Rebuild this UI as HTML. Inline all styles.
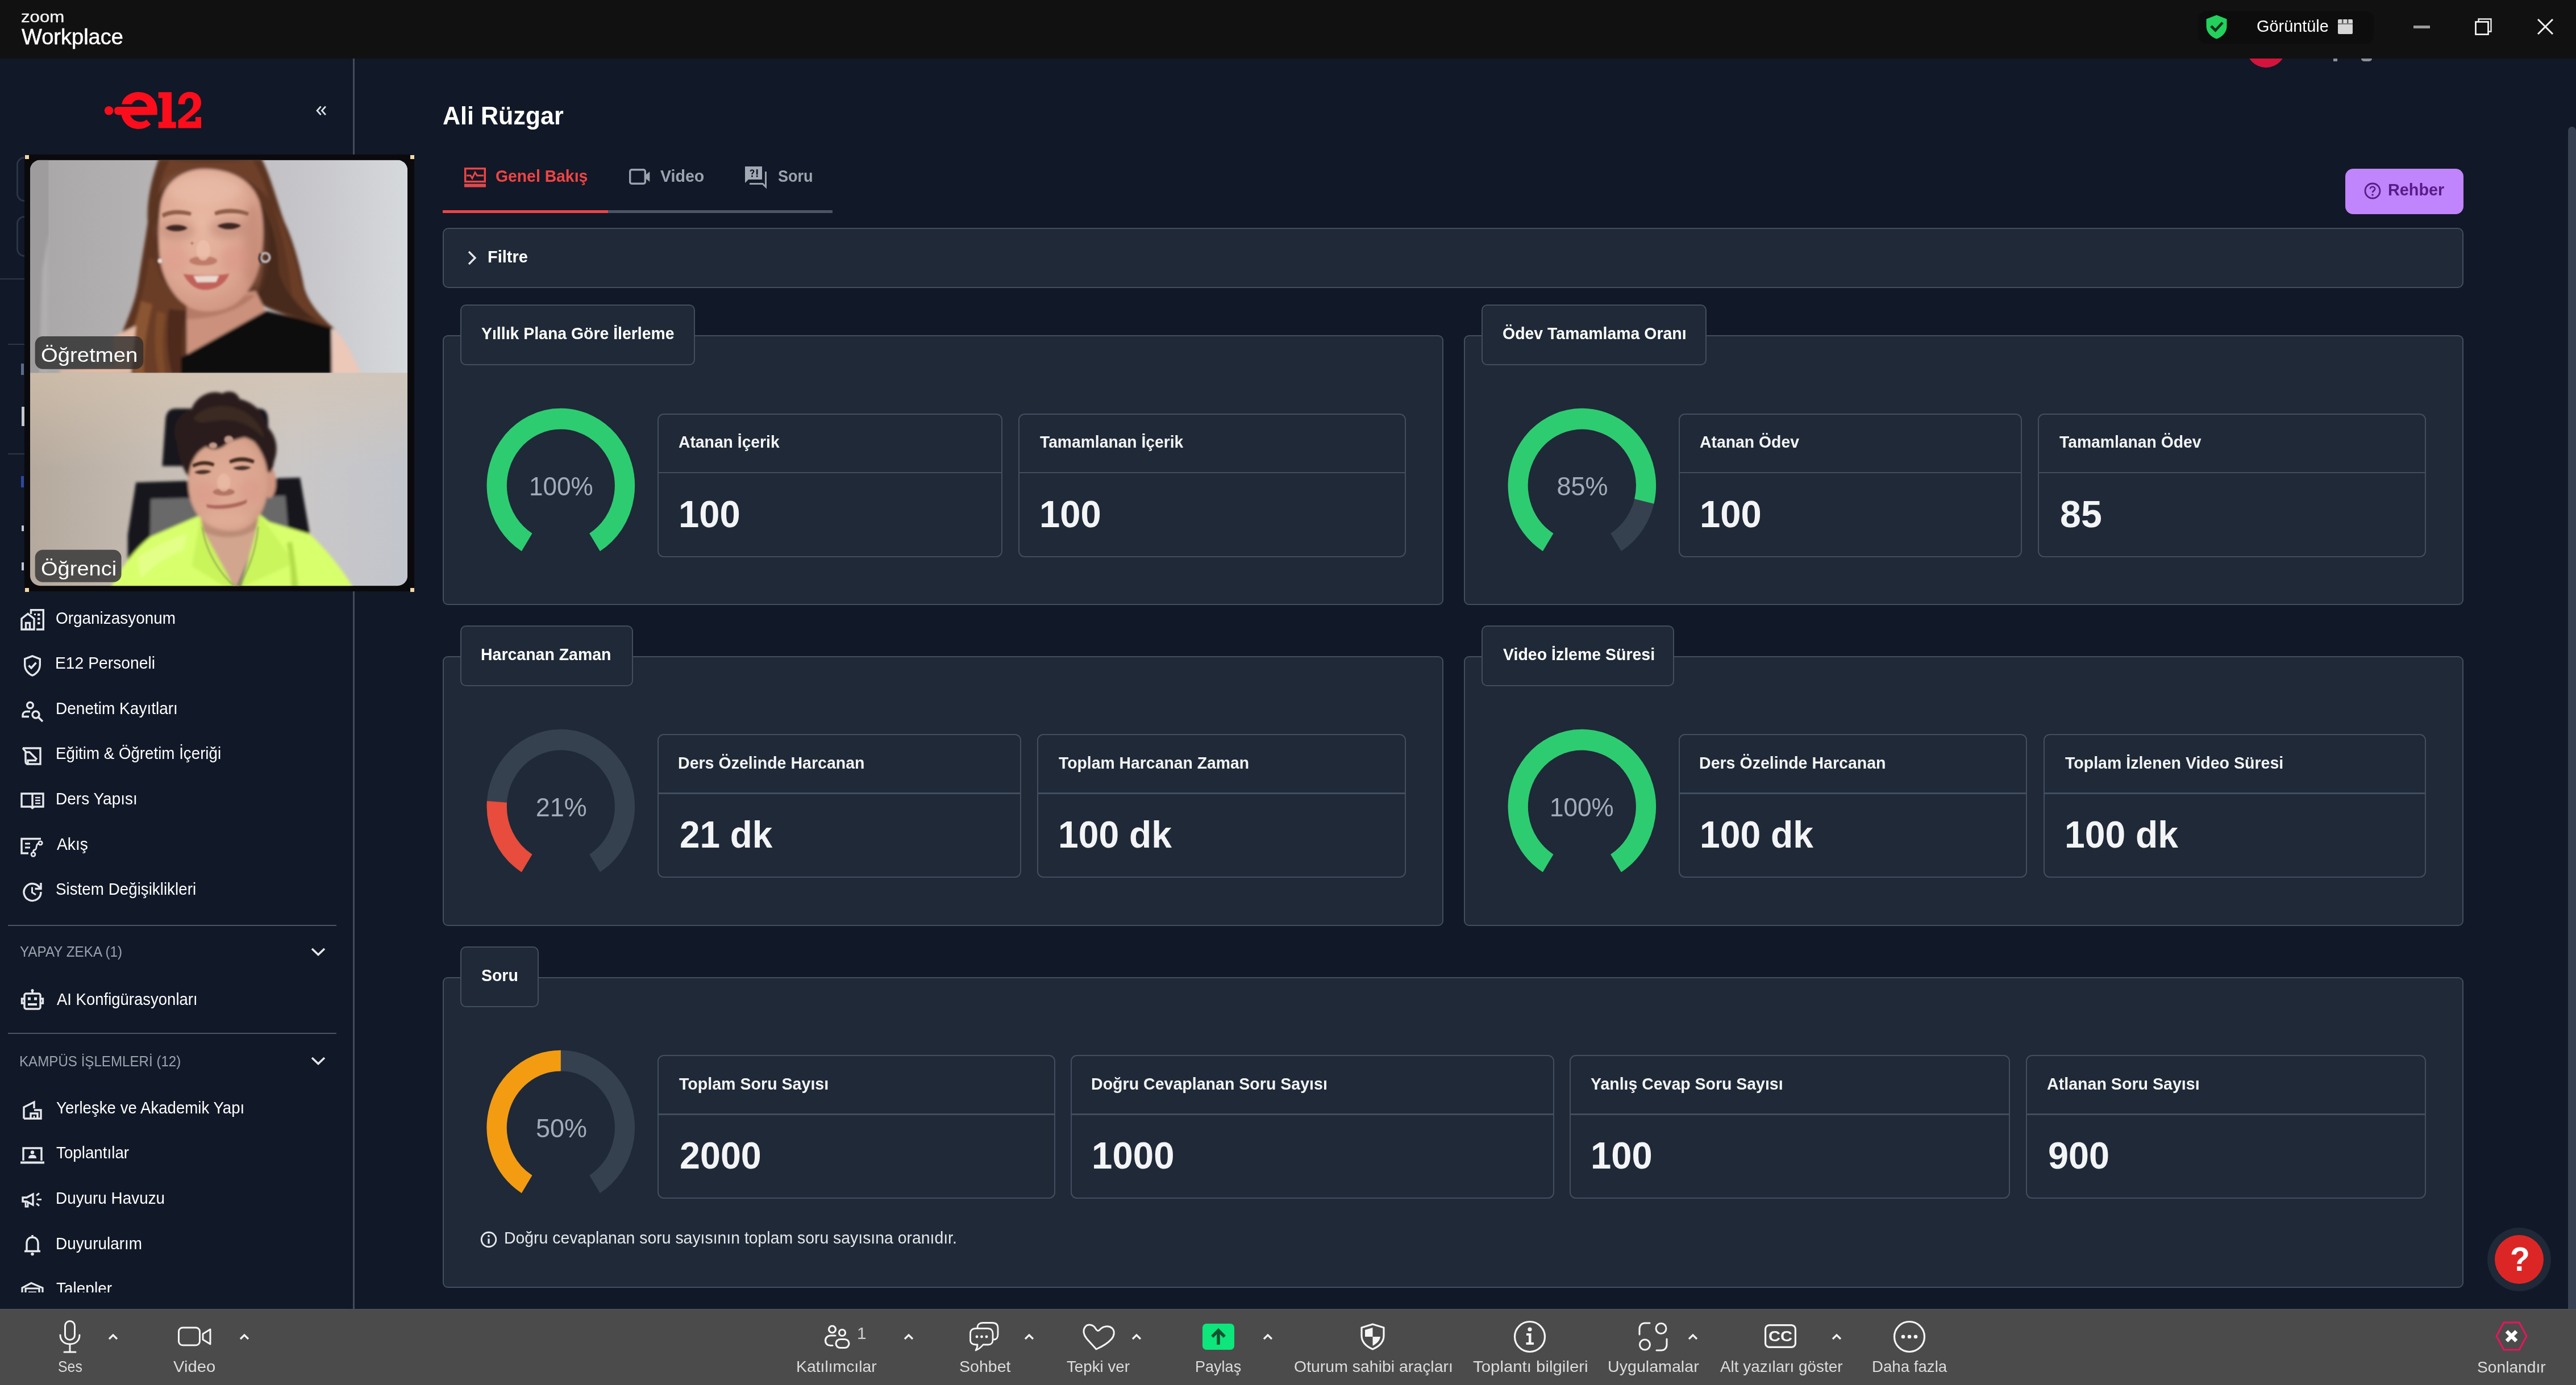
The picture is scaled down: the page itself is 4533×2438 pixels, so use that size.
<!DOCTYPE html>
<html><head><meta charset="utf-8"><title>Zoom Workplace</title>
<style>
html,body{margin:0;padding:0;background:#111827;}
body{width:4533px;height:2438px;position:relative;overflow:hidden;font-family:"Liberation Sans",sans-serif;}
.t{position:absolute;white-space:nowrap;line-height:1;transform-origin:0 50%;}
.b{position:absolute;box-sizing:border-box;}
svg{position:absolute;overflow:visible;}
</style></head><body>
<div class="b" style="left:0px;top:103px;width:4533px;height:2201px;background:#111827;"></div>
<div class="b" style="left:620.7px;top:103px;width:3.2999999999999545px;height:2201px;background:#434b5b;"></div>
<div class="t" style="left:778.9px;top:183.5px;font-size:42px;color:#ffffff;font-weight:700;transform:scale(1.0242,1.035);">Ali Rüzgar</div>
<div class="b" style="left:779px;top:370px;width:686px;height:5px;background:#4b5563;"></div>
<div class="b" style="left:779px;top:370px;width:291px;height:5px;background:#ef4444;"></div>
<div class="t" style="left:871.9px;top:296.8px;font-size:28px;color:#ef4444;font-weight:700;transform:scale(1.0123,1.035);">Genel Bakış</div>
<div class="t" style="left:1161.9px;top:296.8px;font-size:28px;color:#9ca3af;font-weight:700;transform:scale(1.0204,1.035);">Video</div>
<div class="t" style="left:1369.2px;top:296.8px;font-size:28px;color:#9ca3af;font-weight:700;transform:scale(0.9666,1.035);">Soru</div>
<div class="b" style="left:4127px;top:297px;width:208px;height:80px;background:#c084fc;border-radius:14px;"></div>
<div class="t" style="left:4202.1px;top:321.3px;font-size:28px;color:#581c87;font-weight:700;transform:scale(1.0295,1.035);">Rehber</div>
<div class="b" style="left:779px;top:401px;width:3556px;height:106px;background:#1f2937;border:2px solid #424e60;border-radius:10px;"></div>
<div class="t" style="left:858.1px;top:439.3px;font-size:28px;color:#ffffff;font-weight:700;transform:scale(1.0356,1.035);">Filtre</div>
<div class="b" style="left:779px;top:590px;width:1761px;height:475px;background:#1f2937;border:2px solid #424e60;border-radius:9px;"></div>
<div class="b" style="left:810px;top:536px;width:413px;height:107px;background:#1f2937;border:2px solid #424e60;border-radius:10px;"></div>
<div class="t" style="left:847.4px;top:574.3px;font-size:28px;color:#ffffff;font-weight:700;transform:scale(1.0148,1.035);">Yıllık Plana Göre İlerleme</div>
<svg class="b" style="left:839.15px;top:706.65px" width="295.70000000000005" height="295.70000000000005" viewBox="839.15 706.65 295.70000000000005 295.70000000000005"><g transform="translate(0 -37.598) scale(1 1.044)"><path d="M927.30 950.03A112.65 112.65 0 1 1 1046.70 950.03" fill="none" stroke="#36414f" stroke-width="35.2"/><path d="M927.30 950.03A112.65 112.65 0 1 1 1046.70 950.03" fill="none" stroke="#2ecc71" stroke-width="35.2"/></g></svg>
<div class="t" style="left:930.7px;top:833.0px;font-size:45px;color:#a3abb8;transform:scale(0.9796,1.035);">100%</div>
<div class="b" style="left:1157px;top:727.5px;width:607px;height:253.0px;border:2px solid #424e60;border-radius:11px;"></div>
<div class="b" style="left:1157px;top:830.5px;width:607px;height:2.5px;background:#424e60;"></div>
<div class="t" style="left:1194.3px;top:765.3px;font-size:28px;color:#f3f4f6;font-weight:700;transform:scale(1.0106,1.035);">Atanan İçerik</div>
<div class="t" style="left:1194.1px;top:871.7px;font-size:65px;color:#f3f4f6;font-weight:700;transform:scale(1.0027,1.035);">100</div>
<div class="b" style="left:1792px;top:727.5px;width:682px;height:253.0px;border:2px solid #424e60;border-radius:11px;"></div>
<div class="b" style="left:1792px;top:830.5px;width:682px;height:2.5px;background:#424e60;"></div>
<div class="t" style="left:1829.7px;top:765.3px;font-size:28px;color:#f3f4f6;font-weight:700;transform:scale(1.0090,1.035);">Tamamlanan İçerik</div>
<div class="t" style="left:1829.1px;top:871.7px;font-size:65px;color:#f3f4f6;font-weight:700;transform:scale(1.0027,1.035);">100</div>
<div class="b" style="left:2576px;top:590px;width:1759px;height:475px;background:#1f2937;border:2px solid #424e60;border-radius:9px;"></div>
<div class="b" style="left:2607px;top:536px;width:396px;height:107px;background:#1f2937;border:2px solid #424e60;border-radius:10px;"></div>
<div class="t" style="left:2643.9px;top:574.3px;font-size:28px;color:#ffffff;font-weight:700;transform:scale(1.0161,1.035);">Ödev Tamamlama Oranı</div>
<svg class="b" style="left:2635.85px;top:706.65px" width="295.70000000000005" height="295.70000000000005" viewBox="2635.85 706.65 295.70000000000005 295.70000000000005"><g transform="translate(0 -37.598) scale(1 1.044)"><path d="M2724.00 950.03A112.65 112.65 0 1 1 2843.40 950.03" fill="none" stroke="#36414f" stroke-width="35.2"/><path d="M2724.00 950.03A112.65 112.65 0 1 1 2893.19 880.99" fill="none" stroke="#2ecc71" stroke-width="35.2"/></g></svg>
<div class="t" style="left:2739.5px;top:833.0px;font-size:45px;color:#a3abb8;transform:scale(1.0000,1.035);">85%</div>
<div class="b" style="left:2954px;top:727.5px;width:604px;height:253.0px;border:2px solid #424e60;border-radius:11px;"></div>
<div class="b" style="left:2954px;top:830.5px;width:604px;height:2.5px;background:#424e60;"></div>
<div class="t" style="left:2991.3px;top:765.3px;font-size:28px;color:#f3f4f6;font-weight:700;transform:scale(1.0129,1.035);">Atanan Ödev</div>
<div class="t" style="left:2991.1px;top:871.7px;font-size:65px;color:#f3f4f6;font-weight:700;transform:scale(1.0027,1.035);">100</div>
<div class="b" style="left:3586px;top:727.5px;width:683px;height:253.0px;border:2px solid #424e60;border-radius:11px;"></div>
<div class="b" style="left:3586px;top:830.5px;width:683px;height:2.5px;background:#424e60;"></div>
<div class="t" style="left:3623.7px;top:765.3px;font-size:28px;color:#f3f4f6;font-weight:700;transform:scale(1.0106,1.035);">Tamamlanan Ödev</div>
<div class="t" style="left:3625.0px;top:871.7px;font-size:65px;color:#f3f4f6;font-weight:700;transform:scale(1.0208,1.035);">85</div>
<div class="b" style="left:779px;top:1155px;width:1761px;height:475px;background:#1f2937;border:2px solid #424e60;border-radius:9px;"></div>
<div class="b" style="left:810px;top:1101px;width:303.5px;height:107px;background:#1f2937;border:2px solid #424e60;border-radius:10px;"></div>
<div class="t" style="left:846.1px;top:1139.3px;font-size:28px;color:#ffffff;font-weight:700;transform:scale(1.0172,1.035);">Harcanan Zaman</div>
<svg class="b" style="left:839.15px;top:1271.65px" width="295.70000000000005" height="295.70000000000005" viewBox="839.15 1271.65 295.70000000000005 295.70000000000005"><g transform="translate(0 -62.458) scale(1 1.044)"><path d="M927.30 1515.03A112.65 112.65 0 1 1 1046.70 1515.03" fill="none" stroke="#36414f" stroke-width="35.2"/><path d="M927.30 1515.03A112.65 112.65 0 0 1 874.65 1411.33" fill="none" stroke="#e74c3c" stroke-width="35.2"/></g></svg>
<div class="t" style="left:942.7px;top:1398.0px;font-size:45px;color:#a3abb8;transform:scale(1.0000,1.035);">21%</div>
<div class="b" style="left:1157px;top:1292px;width:640px;height:253px;border:2px solid #424e60;border-radius:11px;"></div>
<div class="b" style="left:1157px;top:1395px;width:640px;height:2.5px;background:#424e60;"></div>
<div class="t" style="left:1193.1px;top:1329.8px;font-size:28px;color:#f3f4f6;font-weight:700;transform:scale(1.0200,1.035);">Ders Özelinde Harcanan</div>
<div class="t" style="left:1195.8px;top:1436.2px;font-size:65px;color:#f3f4f6;font-weight:700;transform:scale(0.9829,1.035);">21 dk</div>
<div class="b" style="left:1825px;top:1292px;width:649px;height:253px;border:2px solid #424e60;border-radius:11px;"></div>
<div class="b" style="left:1825px;top:1395px;width:649px;height:2.5px;background:#424e60;"></div>
<div class="t" style="left:1862.7px;top:1329.8px;font-size:28px;color:#f3f4f6;font-weight:700;transform:scale(1.0126,1.035);">Toplam Harcanan Zaman</div>
<div class="t" style="left:1862.1px;top:1436.2px;font-size:65px;color:#f3f4f6;font-weight:700;transform:scale(0.9887,1.035);">100 dk</div>
<div class="b" style="left:2576px;top:1155px;width:1759px;height:475px;background:#1f2937;border:2px solid #424e60;border-radius:9px;"></div>
<div class="b" style="left:2607px;top:1101px;width:339px;height:107px;background:#1f2937;border:2px solid #424e60;border-radius:10px;"></div>
<div class="t" style="left:2644.9px;top:1139.3px;font-size:28px;color:#ffffff;font-weight:700;transform:scale(1.0177,1.035);">Video İzleme Süresi</div>
<svg class="b" style="left:2635.85px;top:1271.65px" width="295.70000000000005" height="295.70000000000005" viewBox="2635.85 1271.65 295.70000000000005 295.70000000000005"><g transform="translate(0 -62.458) scale(1 1.044)"><path d="M2724.00 1515.03A112.65 112.65 0 1 1 2843.40 1515.03" fill="none" stroke="#36414f" stroke-width="35.2"/><path d="M2724.00 1515.03A112.65 112.65 0 1 1 2843.40 1515.03" fill="none" stroke="#2ecc71" stroke-width="35.2"/></g></svg>
<div class="t" style="left:2727.4px;top:1398.0px;font-size:45px;color:#a3abb8;transform:scale(0.9796,1.035);">100%</div>
<div class="b" style="left:2954px;top:1292px;width:613px;height:253px;border:2px solid #424e60;border-radius:11px;"></div>
<div class="b" style="left:2954px;top:1395px;width:613px;height:2.5px;background:#424e60;"></div>
<div class="t" style="left:2990.1px;top:1329.8px;font-size:28px;color:#f3f4f6;font-weight:700;transform:scale(1.0200,1.035);">Ders Özelinde Harcanan</div>
<div class="t" style="left:2991.1px;top:1436.2px;font-size:65px;color:#f3f4f6;font-weight:700;transform:scale(0.9887,1.035);">100 dk</div>
<div class="b" style="left:3596px;top:1292px;width:673px;height:253px;border:2px solid #424e60;border-radius:11px;"></div>
<div class="b" style="left:3596px;top:1395px;width:673px;height:2.5px;background:#424e60;"></div>
<div class="t" style="left:3633.7px;top:1329.8px;font-size:28px;color:#f3f4f6;font-weight:700;transform:scale(1.0189,1.035);">Toplam İzlenen Video Süresi</div>
<div class="t" style="left:3633.1px;top:1436.2px;font-size:65px;color:#f3f4f6;font-weight:700;transform:scale(0.9887,1.035);">100 dk</div>
<div class="b" style="left:779px;top:1720px;width:3556px;height:547px;background:#1f2937;border:2px solid #424e60;border-radius:9px;"></div>
<div class="b" style="left:810px;top:1666px;width:137.5px;height:107px;background:#1f2937;border:2px solid #424e60;border-radius:10px;"></div>
<div class="t" style="left:847.1px;top:1704.3px;font-size:28px;color:#ffffff;font-weight:700;transform:scale(1.0157,1.035);">Soru</div>
<svg class="b" style="left:839.15px;top:1836.65px" width="295.70000000000005" height="295.70000000000005" viewBox="839.15 1836.65 295.70000000000005 295.70000000000005"><g transform="translate(0 -87.318) scale(1 1.044)"><path d="M927.30 2080.03A112.65 112.65 0 1 1 1046.70 2080.03" fill="none" stroke="#36414f" stroke-width="35.2"/><path d="M927.30 2080.03A112.65 112.65 0 0 1 987.00 1871.85" fill="none" stroke="#f39c12" stroke-width="35.2"/></g></svg>
<div class="t" style="left:942.9px;top:1963.0px;font-size:45px;color:#a3abb8;transform:scale(1.0000,1.035);">50%</div>
<div class="b" style="left:1157px;top:1857px;width:699.5px;height:253px;border:2px solid #424e60;border-radius:11px;"></div>
<div class="b" style="left:1157px;top:1960px;width:699.5px;height:2.5px;background:#424e60;"></div>
<div class="t" style="left:1194.7px;top:1894.8px;font-size:28px;color:#f3f4f6;font-weight:700;transform:scale(1.0210,1.035);">Toplam Soru Sayısı</div>
<div class="t" style="left:1195.7px;top:2001.2px;font-size:65px;color:#f3f4f6;font-weight:700;transform:scale(0.9946,1.035);">2000</div>
<div class="b" style="left:1884px;top:1857px;width:850.5px;height:253px;border:2px solid #424e60;border-radius:11px;"></div>
<div class="b" style="left:1884px;top:1960px;width:850.5px;height:2.5px;background:#424e60;"></div>
<div class="t" style="left:1920.1px;top:1894.8px;font-size:28px;color:#f3f4f6;font-weight:700;transform:scale(1.0201,1.035);">Doğru Cevaplanan Soru Sayısı</div>
<div class="t" style="left:1921.1px;top:2001.2px;font-size:65px;color:#f3f4f6;font-weight:700;transform:scale(1.0063,1.035);">1000</div>
<div class="b" style="left:2762px;top:1857px;width:775px;height:253px;border:2px solid #424e60;border-radius:11px;"></div>
<div class="b" style="left:2762px;top:1960px;width:775px;height:2.5px;background:#424e60;"></div>
<div class="t" style="left:2799.4px;top:1894.8px;font-size:28px;color:#f3f4f6;font-weight:700;transform:scale(1.0165,1.035);">Yanlış Cevap Soru Sayısı</div>
<div class="t" style="left:2799.1px;top:2001.2px;font-size:65px;color:#f3f4f6;font-weight:700;transform:scale(1.0027,1.035);">100</div>
<div class="b" style="left:3565px;top:1857px;width:704px;height:253px;border:2px solid #424e60;border-radius:11px;"></div>
<div class="b" style="left:3565px;top:1960px;width:704px;height:2.5px;background:#424e60;"></div>
<div class="t" style="left:3602.3px;top:1894.8px;font-size:28px;color:#f3f4f6;font-weight:700;transform:scale(1.0215,1.035);">Atlanan Soru Sayısı</div>
<div class="t" style="left:3603.7px;top:2001.2px;font-size:65px;color:#f3f4f6;font-weight:700;transform:scale(0.9966,1.035);">900</div>
<div class="t" style="left:887.2px;top:2165.8px;font-size:28px;color:#e5e7eb;transform:scale(1.0138,1.035);">Doğru cevaplanan soru sayısının toplam soru sayısına oranıdır.</div>
<div class="b" style="left:4519px;top:223px;width:14px;height:2081px;background:#374151;border-radius:7px 7px 0 0;"></div>
<div class="b" style="left:4377px;top:2161px;width:112px;height:112px;border-radius:56px;background:#1f2937"></div>
<div class="b" style="left:4390px;top:2174px;width:86px;height:86px;border-radius:43px;background:#dc2626"></div>
<div class="t" style="left:4416.9px;top:2187.7px;font-size:57px;color:#ffffff;font-weight:700;transform:scale(1.0000,1.035);">?</div>
<div class="b" style="left:0px;top:2303.5px;width:4533px;height:134.5px;background:#4b4b4b;"></div>
<div class="b" style="left:0px;top:2303.5px;width:4533px;height:2.5px;background:#4d5058;"></div>
<div class="b" style="left:3953px;top:50px;width:69px;height:69px;border-radius:50%;background:#d4143c"></div>
<div class="b" style="left:4106px;top:103px;width:7px;height:5px;background:#8a8f99;"></div>
<div class="b" style="left:4155px;top:103px;width:19px;height:5px;background:#8a8f99;border-radius:0 0 6px 6px;"></div>
<div class="b" style="left:0px;top:0px;width:4533px;height:103px;background:#111111;"></div>
<div class="t" style="left:36.8px;top:17.4px;font-size:27px;color:#f2f2f2;transform:scale(1.1554,1.035);-webkit-text-stroke:0.4px #f2f2f2;">zoom</div>
<div class="t" style="left:37.8px;top:45.7px;font-size:38px;color:#ffffff;transform:scale(1.0006,1.035);-webkit-text-stroke:0.5px #fff;">Workplace</div>
<div class="b" style="left:3868px;top:20px;width:309px;height:57px;background:#0d0d0d;border-radius:14px;"></div>
<svg style="left:3881px;top:26px" width="39" height="43" viewBox="0 0 39 43">
<path d="M19.5 0.5 L37.5 7.5 V20 C37.5 31 29.5 39 19.5 42.5 C9.5 39 1.5 31 1.5 20 V7.5 Z" fill="#23d15c"/>
<path d="M11.5 21.5 L17.5 27.5 L28.5 15.5" fill="none" stroke="#14321f" stroke-width="4.6" stroke-linecap="square"/>
</svg>
<div class="t" style="left:3970.6px;top:31.8px;font-size:29px;color:#ffffff;transform:scale(0.9955,1.035);">Görüntüle</div>
<svg style="left:4114px;top:34px" width="26" height="26" viewBox="0 0 26 26">
<rect x="0" y="0" width="26" height="26" rx="2" fill="#d6d6d6"/>
<rect x="7" y="0" width="2.5" height="7" fill="#555"/><rect x="16" y="0" width="2.5" height="7" fill="#555"/>
<rect x="0" y="7" width="26" height="2" fill="#7a7a7a"/>
</svg>
<div class="b" style="left:4247px;top:45px;width:29px;height:5px;background:#9a9a9a;"></div>
<svg style="left:4355px;top:32px" width="30" height="30" viewBox="0 0 30 30">
<path d="M6.5 6.5 V1.5 H28.5 V23.5 H23.5" fill="none" stroke="#e8e8e8" stroke-width="2.4"/>
<rect x="1.5" y="6.5" width="22" height="22" fill="none" stroke="#ffffff" stroke-width="2.6"/>
</svg>
<svg style="left:4465px;top:33px" width="28" height="28" viewBox="0 0 28 28">
<path d="M1 1 L27 27 M27 1 L1 27" fill="none" stroke="#f0f0f0" stroke-width="3"/>
</svg>
<svg style="left:170px;top:150px" width="200" height="90" viewBox="0 0 2576 1159">
<g fill="#fb0d1b">
<circle cx="278" cy="577" r="100"/>
<path d="M570 430 C600 250 780 155 950 155 C1200 155 1375 330 1375 560 L1375 672 L760 680 C800 780 900 830 1000 830 C1050 830 1100 810 1130 780 L1230 890 C1150 960 1050 992 950 992 C750 992 600 860 560 672 L480 672 Q400 672 400 581 Q400 490 480 490 L1150 490 C1130 400 1050 330 950 330 C880 330 830 370 800 430 Z"/>
<path d="M1400 158 H1700 V830 H1800 V972 H1400 V830 H1490 V290 H1400 Z"/>
<path d="M1850 430 C1850 250 1960 150 2110 150 C2270 150 2370 250 2370 390 C2370 520 2300 580 2200 660 L2010 820 H2240 V720 H2370 V972 H1850 V800 L2100 590 C2170 530 2190 480 2190 400 C2190 330 2160 290 2100 290 C2040 290 2000 340 2000 430 Z"/>
</g></svg>
<svg style="left:555px;top:185.5px" width="21" height="17.5" viewBox="0 0 21 20" fill="none" stroke="#dfe3ea" stroke-width="3.2">
<path d="M9.5 1.5 L2 10 L9.5 18.5 M19 1.5 L11.5 10 L19 18.5"/></svg>
<div class="b" style="left:29px;top:276px;width:91px;height:79px;border:3px solid #2a3447;border-radius:14px;"></div>
<div class="b" style="left:29px;top:380px;width:91px;height:72px;border:3px solid #2a3447;border-radius:14px;"></div>
<div class="b" style="left:0px;top:490px;width:60px;height:2px;background:#2d3748;"></div>
<div class="b" style="left:14px;top:605px;width:46px;height:2px;background:#2d3748;"></div>
<div class="b" style="left:14px;top:798px;width:46px;height:2px;background:#2d3748;"></div>
<div class="b" style="left:37px;top:640px;width:5px;height:20px;background:#5b6b8c;"></div>
<div class="b" style="left:38px;top:716px;width:5px;height:34px;background:#c5c8d0;"></div>
<div class="b" style="left:37px;top:838px;width:5px;height:20px;background:#3046a0;"></div>
<div class="b" style="left:38px;top:925px;width:4px;height:10px;background:#c5c8d0;"></div>
<div class="b" style="left:38px;top:990px;width:4px;height:14px;background:#c5c8d0;"></div>
<div class="t" style="left:98.4px;top:1074.6px;font-size:28px;color:#ffffff;transform:scale(0.9971,1.035);">Organizasyonum</div>
<div class="t" style="left:97.4px;top:1154.2px;font-size:28px;color:#ffffff;transform:scale(1.0103,1.035);">E12 Personeli</div>
<div class="t" style="left:97.5px;top:1233.8px;font-size:28px;color:#ffffff;transform:scale(1.0007,1.035);">Denetim Kayıtları</div>
<div class="t" style="left:97.5px;top:1313.4px;font-size:28px;color:#ffffff;transform:scale(0.9899,1.035);">Eğitim &amp; Öğretim İçeriği</div>
<div class="t" style="left:97.5px;top:1393.0px;font-size:28px;color:#ffffff;transform:scale(1.0009,1.035);">Ders Yapısı</div>
<div class="t" style="left:99.7px;top:1472.6px;font-size:28px;color:#ffffff;transform:scale(1.0097,1.035);">Akış</div>
<div class="t" style="left:98.4px;top:1552.2px;font-size:28px;color:#ffffff;transform:scale(0.9925,1.035);">Sistem Değişiklikleri</div>
<div class="t" style="left:99.7px;top:1745.8px;font-size:28px;color:#ffffff;transform:scale(0.9820,1.035);">AI Konfigürasyonları</div>
<div class="t" style="left:99.0px;top:1936.8px;font-size:28px;color:#ffffff;transform:scale(0.9869,1.035);">Yerleşke ve Akademik Yapı</div>
<div class="t" style="left:99.1px;top:2016.4px;font-size:28px;color:#ffffff;transform:scale(0.9914,1.035);">Toplantılar</div>
<div class="t" style="left:97.5px;top:2096.0px;font-size:28px;color:#ffffff;transform:scale(0.9954,1.035);">Duyuru Havuzu</div>
<div class="t" style="left:97.5px;top:2175.6px;font-size:28px;color:#ffffff;transform:scale(0.9964,1.035);">Duyurularım</div>
<div class="b" style="left:0;top:2230px;width:620px;height:45px;overflow:hidden"><div class="t" style="left:99.1px;top:25.2px;font-size:28px;color:#ffffff;transform:scale(0.9998,1.035);">Talepler</div>
<svg style="left:37px;top:26px" width="40" height="30" viewBox="0 0 40 30" fill="none" stroke="#e5e7eb" stroke-width="3.2"><path d="M2 20 V11 L18 2.5 L38 11 V20"/><path d="M8 20 V12 H32 V20"/><path d="M13 19 H27"/></svg></div>
<div class="b" style="left:14px;top:1628px;width:578px;height:2px;background:#4b5563;"></div>
<div class="b" style="left:14px;top:1818px;width:578px;height:2px;background:#4b5563;"></div>
<div class="t" style="left:35.4px;top:1664.0px;font-size:24.6px;color:#9ca3af;transform:scale(0.9858,1.035);">YAPAY ZEKA (1)</div>
<div class="t" style="left:34.1px;top:1857.0px;font-size:24.6px;color:#9ca3af;transform:scale(0.9813,1.035);">KAMPÜS İŞLEMLERİ (12)</div>
<svg style="left:547px;top:1668px" width="26" height="16" viewBox="0 0 26 16" fill="none" stroke="#e5e7eb" stroke-width="3.6"><path d="M2 2 L13 12.5 L24 2"/></svg>
<svg style="left:547px;top:1860px" width="26" height="16" viewBox="0 0 26 16" fill="none" stroke="#e5e7eb" stroke-width="3.6"><path d="M2 2 L13 12.5 L24 2"/></svg>
<svg style="left:36.0px;top:1071.5px" width="42" height="38" viewBox="0 0 42 38" fill="none" stroke="#e5e7eb" stroke-width="3.4" stroke-linejoin="miter"><path d="M2 36 V17 L13 8.5 L24 17 V36 Z"/><path d="M9.5 36 V24.5 H16.5 V36" /><path d="M18.5 9 V1.7 H40.3 V36 H28"/>
<g fill="#e5e7eb" stroke="none"><rect x="30" y="8" width="4.5" height="4"/><rect x="30" y="15.5" width="4.5" height="4"/><rect x="30" y="23" width="4.5" height="4"/><rect x="24" y="8" width="3" height="3"/></g></svg>
<svg style="left:42.0px;top:1153.0px" width="30" height="38" viewBox="0 0 30 38" fill="none" stroke="#e5e7eb" stroke-width="3.4" stroke-linejoin="miter"><path d="M15 1.8 L28.3 7 V17 C28.3 26 22.5 33 15 36 C7.5 33 1.7 26 1.7 17 V7 Z"/><path d="M8.5 18.5 L13 23 L21.5 13.5" stroke-width="3.6"/></svg>
<svg style="left:38.0px;top:1234.0px" width="40" height="40" viewBox="0 0 40 40" fill="none" stroke="#e5e7eb" stroke-width="3.4" stroke-linejoin="miter"><circle cx="15" cy="7.5" r="5.3"/><path d="M15 18.5 H9 C5 18.5 2 21 2 25 V27.5 H13"/><circle cx="25" cy="24" r="6"/><path d="M29.5 28.5 L37 36" stroke-width="3.6"/></svg>
<svg style="left:38.0px;top:1315.0px" width="38" height="32" viewBox="0 0 38 32" fill="none" stroke="#e5e7eb" stroke-width="3.4" stroke-linejoin="miter"><path d="M2 2 H33 V30 H11 V23.5 H26" /><path d="M2 2 L8 9 H14 L27 22" /><path d="M11 30 C8 30 7 28 7 25 V9"/></svg>
<svg style="left:36.0px;top:1395.0px" width="42" height="30" viewBox="0 0 42 30" fill="none" stroke="#e5e7eb" stroke-width="3.4" stroke-linejoin="miter"><path d="M2 2 H40 V25 H24 L21 27.5 L18 25 H2 Z"/><path d="M21 3 V26"/><path d="M26 9 H35 M26 14 H35 M26 19 H35" stroke-width="2.6"/></svg>
<svg style="left:36.0px;top:1474.0px" width="42" height="36" viewBox="0 0 42 36" fill="none" stroke="#e5e7eb" stroke-width="3.4" stroke-linejoin="miter"><path d="M36 2.5 H2 V28 H14"/><path d="M8 11 H17 M8 18 H17" stroke-width="3"/><circle cx="35" cy="10" r="3.2" stroke-width="2.8"/><circle cx="22.5" cy="30" r="3.4" stroke-width="2.8"/><path d="M32 11 C26 11 30 22 25 22 C22.5 22 22.5 25 22.5 26.5" stroke-width="2.8"/></svg>
<svg style="left:39.0px;top:1552.0px" width="36" height="36" viewBox="0 0 36 36" fill="none" stroke="#e5e7eb" stroke-width="3.4" stroke-linejoin="miter"><path d="M31.5 12 A15 15 0 1 0 33 18"/><path d="M33 2 V12.5 H22.5" /><path d="M17.5 9.5 V19 L24 23" stroke-width="3"/></svg>
<svg style="left:36.0px;top:1741.0px" width="42" height="38" viewBox="0 0 42 38" fill="none" stroke="#e5e7eb" stroke-width="3.4" stroke-linejoin="miter"><rect x="7" y="8" width="28" height="27" rx="3"/><path d="M21 8 V2" /><path d="M7 17 H2.5 V25 H7 M35 17 H39.5 V25 H35" />
<g fill="#e5e7eb" stroke="none"><rect x="13" y="14.5" width="5" height="5"/><rect x="24" y="14.5" width="5" height="5"/><rect x="13" y="25" width="16" height="4"/><circle cx="21" cy="2.5" r="2.5"/></g></svg>
<svg style="left:39.5px;top:1937.0px" width="34" height="34" viewBox="0 0 34 34" fill="none" stroke="#e5e7eb" stroke-width="3.4" stroke-linejoin="miter"><path d="M2 32 V12 L20 3 V14" /><path d="M2 32 H32 V17 H20" /><path d="M14 32 V23 H26 V32" /><path d="M20 27 V32" stroke-width="2.4"/></svg>
<svg style="left:36.0px;top:2018.5px" width="42" height="30" viewBox="0 0 42 30" fill="none" stroke="#e5e7eb" stroke-width="3.4" stroke-linejoin="miter"><path d="M5 24 V2 H37 V24"/><path d="M0 27.5 H42" stroke-width="4"/><g fill="#e5e7eb" stroke="none"><circle cx="21" cy="9.5" r="3.2"/><path d="M14 20 C14 15 17 14 21 14 C25 14 28 15 28 20 Z"/></g></svg>
<svg style="left:37.0px;top:2098.0px" width="40" height="30" viewBox="0 0 40 30" fill="none" stroke="#e5e7eb" stroke-width="3.4" stroke-linejoin="miter"><path d="M3 10 H10 L21 4 V23 L10 17 H3 Z" /><path d="M8 17.5 V26 H12 V18" stroke-width="2.8"/><path d="M27 6.5 L32 2.5 M28.5 13.5 H36 M27 20.5 L32 24.5" stroke-width="3"/></svg>
<svg style="left:42.0px;top:2173.0px" width="30" height="38" viewBox="0 0 30 38" fill="none" stroke="#e5e7eb" stroke-width="3.4" stroke-linejoin="miter"><path d="M5 28 V16 C5 9 9 5 15 5 C21 5 25 9 25 16 V28" /><path d="M1 29.5 H29" stroke-width="3.6"/><path d="M15 5 V1" /><g fill="#e5e7eb" stroke="none"><circle cx="15" cy="34.5" r="2.8"/></g></svg>
<div class="b" style="left:43px;top:272px;width:686px;height:769px;background:#0a0a0c;border-radius:6px;"></div>
<div class="b" style="left:44px;top:273px;width:7px;height:7px;background:#f3d7a6;"></div>
<div class="b" style="left:722px;top:273px;width:7px;height:7px;background:#f3d7a6;"></div>
<div class="b" style="left:44px;top:1035px;width:7px;height:7px;background:#f3d7a6;"></div>
<div class="b" style="left:722px;top:1035px;width:7px;height:7px;background:#f3d7a6;"></div>
<svg style="left:40px;top:270px" width="700" height="780" viewBox="0 0 2424 2701">
<defs>
<clipPath id="vc"><rect x="45" y="40" width="2300" height="2596" rx="62"/></clipPath>
<clipPath id="c1"><rect x="45" y="40" width="2300" height="1300"/></clipPath>
<clipPath id="c2"><rect x="45" y="1338" width="2300" height="1300"/></clipPath>
<filter id="bl" x="-5%" y="-5%" width="110%" height="110%"><feGaussianBlur stdDeviation="10"/></filter>
<filter id="bl2" x="-30%" y="-30%" width="160%" height="160%"><feGaussianBlur stdDeviation="28"/></filter>
<filter id="bl3" x="-20%" y="-20%" width="140%" height="140%"><feGaussianBlur stdDeviation="6"/></filter>
<linearGradient id="w1" x1="0" x2="1" y1="0" y2="0"><stop offset="0" stop-color="#a9a6a7"/><stop offset="0.3" stop-color="#b5b2b4"/><stop offset="0.72" stop-color="#c6c5c9"/><stop offset="1" stop-color="#d6d9db"/></linearGradient>
<linearGradient id="w2" x1="0" x2="1" y1="0" y2="0"><stop offset="0" stop-color="#b5a99d"/><stop offset="0.35" stop-color="#c6bdb4"/><stop offset="0.7" stop-color="#cac7c7"/><stop offset="1" stop-color="#c2c5cc"/></linearGradient>
<linearGradient id="w2v" x1="0" x2="0" y1="0" y2="1"><stop offset="0" stop-color="#d9c5ae" stop-opacity="0.6"/><stop offset="0.45" stop-color="#d9c5ae" stop-opacity="0"/></linearGradient>
<radialGradient id="face1" cx="0.42" cy="0.38" r="0.75"><stop offset="0" stop-color="#e9b9a4"/><stop offset="0.6" stop-color="#dda893"/><stop offset="1" stop-color="#c98c78"/></radialGradient>
<radialGradient id="face2" cx="0.48" cy="0.5" r="0.65"><stop offset="0" stop-color="#e2ad98"/><stop offset="0.7" stop-color="#d9a48e"/><stop offset="1" stop-color="#c28c76"/></radialGradient>
</defs>
<g clip-path="url(#vc)">
<!-- ===== teacher ===== -->
<g clip-path="url(#c1)">
<rect x="45" y="40" width="2300" height="1300" fill="url(#w1)"/>
<rect x="45" y="40" width="112" height="1300" fill="#9e9c9c"/>
<path d="M100 1340 L118 720 L160 480 L160 1340 Z" fill="#b0aeaf" filter="url(#bl)"/>
<g filter="url(#bl)">
<!-- hair base -->
<path d="M830 30 C785 150 752 300 762 420 C742 560 722 660 702 800 C682 920 632 1020 600 1110 L620 1345 L1000 1345 L1000 900 L1420 900 C1500 960 1700 1020 1905 1075 C1820 1000 1745 920 1715 820 C1695 700 1645 520 1595 420 C1545 280 1515 150 1455 30 Z" fill="#5c3524"/>
<!-- top highlight -->
<path d="M900 40 C1000 60 1250 60 1400 40 C1450 120 1480 200 1500 280 C1400 150 1250 90 1100 90 C980 90 880 150 820 260 C840 170 860 100 900 40 Z" fill="#6e412a"/>
<!-- right dark side -->
<path d="M1450 300 C1520 420 1560 560 1560 720 C1600 860 1700 960 1800 1020 C1700 1010 1560 960 1420 900 C1470 760 1490 520 1450 300 Z" fill="#472a1d"/>
<path d="M1520 300 C1580 420 1640 560 1680 740 C1700 860 1760 960 1880 1060 C1780 1020 1700 960 1640 860 C1620 700 1590 500 1520 300 Z" fill="#6a3d27"/>
<!-- left strands -->
<path d="M770 640 C750 820 700 980 650 1100 L660 1345 L980 1345 C960 1200 960 1040 1000 930 C900 860 830 760 800 640 Z" fill="#6a3d26"/>
<path d="M720 900 C700 1000 670 1080 650 1150 L680 1345 L740 1345 C730 1200 760 1050 790 920 Z" fill="#8a5531"/>
<path d="M820 960 C800 1080 800 1220 830 1345 L870 1345 C850 1220 850 1080 870 980 Z" fill="#7e4b2c"/>
<path d="M890 950 C870 1100 880 1250 910 1345 L980 1345 C960 1200 970 1060 1000 960 Z" fill="#4e2b1b"/>
<!-- left shoulder skin -->
<path d="M550 1120 L690 1050 L660 1345 L220 1345 L230 1322 L560 1300 Z" fill="#e3baa4"/>
<!-- neck -->
<path d="M1000 880 L1000 1260 L1480 960 L1420 840 Z" fill="#cb917b"/>
<path d="M1000 900 L1000 1010 C1150 1010 1330 960 1420 860 Z" fill="#b67a66"/>
<!-- face -->
<path d="M1100 95 C950 100 850 200 838 330 C825 450 825 560 840 660 C860 780 920 880 1010 935 C1080 975 1200 975 1290 920 C1380 860 1440 740 1455 600 C1470 480 1465 380 1440 290 C1400 170 1280 95 1100 95 Z" fill="url(#face1)"/>
<!-- black top -->
<path d="M965 1345 L965 1245 L1300 1060 L1480 960 L1700 1010 L1880 1065 L1886 1345 Z" fill="#0d0a10"/>
<!-- right arm -->
<path d="M1884 1070 C1940 1100 1990 1180 2062 1345 L1884 1345 Z" fill="#ecc8b9"/>
</g>
<!-- soft face shading -->
<g filter="url(#bl2)">
<ellipse cx="1400" cy="560" rx="60" ry="260" fill="#b9806c" opacity="0.55"/>
<ellipse cx="930" cy="640" rx="80" ry="90" fill="#e09a8c" opacity="0.5"/>
<ellipse cx="1300" cy="640" rx="90" ry="90" fill="#da9284" opacity="0.5"/>
<ellipse cx="1110" cy="220" rx="230" ry="90" fill="#ebbfaa" opacity="0.6"/>
<ellipse cx="940" cy="470" rx="110" ry="60" fill="#b98372" opacity="0.55"/>
<ellipse cx="1250" cy="460" rx="115" ry="60" fill="#b98372" opacity="0.55"/>
</g>
<!-- face details -->
<g filter="url(#bl3)">
<path d="M848 368 C900 338 980 342 1028 360 L1022 380 C970 366 900 366 855 392 Z" fill="#8f5f48"/>
<path d="M1168 356 C1230 332 1310 332 1378 360 L1372 380 C1310 358 1230 360 1174 378 Z" fill="#8f5f48"/>
<path d="M870 455 C900 430 970 430 1005 455 C970 480 905 482 870 455 Z" fill="#3e2820"/>
<path d="M1185 442 C1220 418 1295 418 1330 440 C1295 468 1225 470 1185 442 Z" fill="#3e2820"/>
<ellipse cx="1100" cy="655" rx="85" ry="28" fill="#c07c68"/>
<ellipse cx="1100" cy="590" rx="42" ry="62" fill="#edc0ab" opacity="0.85"/>
<path d="M978 735 C1060 748 1180 748 1258 733 C1235 800 1172 832 1110 832 C1050 832 1008 792 978 735 Z" fill="#c1625a"/>
<path d="M1040 748 L1195 746 L1178 784 L1062 786 Z" fill="#ead8ce"/>
<circle cx="1478" cy="634" r="27" fill="none" stroke="#d8d4dc" stroke-width="12"/>
<path d="M1452 610 C1440 630 1440 650 1456 668" stroke="#2a1a14" stroke-width="14" fill="none"/>
<circle cx="836" cy="655" r="14" fill="#e6dcdc"/>
<circle cx="1032" cy="548" r="6" fill="#7a4a3a"/>
</g>
</g>
<!-- ===== student ===== -->
<g clip-path="url(#c2)">
<g transform="translate(0,1316)">
<rect x="45" y="20" width="2300" height="1310" fill="url(#w2)"/>
<rect x="45" y="20" width="2300" height="1310" fill="url(#w2v)"/>
<g filter="url(#bl)">
<path d="M930 240 L1440 240 C1480 240 1495 270 1495 310 L1500 590 L850 590 L870 310 C872 270 890 240 930 240 Z" fill="#15151a"/>
<path d="M690 690 L1690 660 L1750 1010 L1700 1335 L640 1335 L640 1010 Z" fill="#14161b"/>
<path d="M780 790 L1600 770 L1620 1000 L1600 1335 L770 1335 Z" fill="#696969"/>
<ellipse cx="1503" cy="690" rx="40" ry="95" fill="#d09782"/>
<path d="M1080 880 L1440 880 L1440 1000 L1300 1335 L1080 1000 Z" fill="#d2a68e"/>
<path d="M1085 900 C1150 990 1350 990 1440 890 L1440 960 C1350 1040 1180 1040 1090 980 Z" fill="#b98a74"/>
<!-- shirt -->
<path d="M535 1335 C600 1200 700 1080 780 1020 L1080 890 L1095 980 L1285 1330 L1330 1330 L1420 1000 L1440 880 L1500 930 L1750 1005 C1850 1100 1950 1220 2015 1335 Z" fill="#d8ff6c"/>
<path d="M1085 895 L1030 1200 L1240 1330 L1290 1330 L1100 985 Z" fill="#c9f45a"/>
<path d="M1440 885 L1660 1180 L1330 1330 L1425 1000 Z" fill="#caf55c"/>
<path d="M1640 1050 C1660 1150 1670 1250 1680 1335 L1635 1335 C1636 1240 1628 1140 1608 1060 Z" fill="#b2de4a"/>
<path d="M700 1150 C800 1080 900 1040 1000 1000 L980 1100 C880 1140 780 1200 720 1280 Z" fill="#e4ff88"/>
<!-- face -->
<path d="M1010 560 C1000 700 1010 800 1060 880 C1110 950 1200 985 1270 985 C1350 985 1420 940 1460 860 C1500 780 1500 660 1490 560 C1470 460 1380 400 1250 400 C1120 400 1030 460 1010 560 Z" fill="url(#face2)"/>
<!-- hair -->
<path d="M940 450 C900 350 950 270 1030 240 C1055 165 1150 120 1215 148 C1255 125 1305 135 1322 182 C1405 200 1470 260 1482 340 C1545 400 1562 480 1532 560 C1522 625 1502 645 1490 620 C1480 540 1440 470 1390 420 C1340 400 1300 445 1260 432 C1230 485 1160 505 1120 472 C1060 500 1022 560 1012 655 C975 610 950 540 940 450 Z" fill="#2a1e1a"/>
<path d="M1040 300 C1100 220 1250 200 1350 260 C1420 300 1460 360 1470 420 C1400 340 1300 300 1200 310 C1130 315 1080 340 1040 300 Z" fill="#3a2a24"/>
</g>
<g filter="url(#bl2)">
<ellipse cx="1120" cy="760" rx="80" ry="70" fill="#dc988a" opacity="0.5"/>
<ellipse cx="1390" cy="740" rx="70" ry="70" fill="#dc988a" opacity="0.5"/>
<ellipse cx="1240" cy="920" rx="150" ry="50" fill="#e6b49e" opacity="0.5"/>
</g>
<g filter="url(#bl3)">
<path d="M1033 580 C1080 554 1130 554 1168 574 L1162 592 C1120 576 1080 578 1040 598 Z" fill="#43291f"/>
<path d="M1258 556 C1310 528 1370 533 1412 555 L1406 574 C1360 556 1310 556 1264 574 Z" fill="#43291f"/>
<path d="M1045 628 C1075 610 1120 610 1150 622 C1120 642 1075 644 1045 628 Z" fill="#4a3028"/>
<path d="M1280 602 C1315 585 1360 586 1392 598 C1360 618 1315 620 1280 602 Z" fill="#4a3028"/>
<ellipse cx="1225" cy="748" rx="66" ry="22" fill="#b47464"/>
<ellipse cx="1225" cy="690" rx="40" ry="55" fill="#e9baa4" opacity="0.85"/>
<path d="M1118 822 C1180 836 1290 826 1368 794 L1362 816 C1290 852 1180 857 1124 842 Z" fill="#ad665c"/>
<ellipse cx="1255" cy="428" rx="28" ry="24" fill="#c49a8a"/>
<ellipse cx="1160" cy="465" rx="26" ry="20" fill="#c49a8a"/>
<path d="M1095 960 C1110 1100 1200 1250 1300 1330" fill="none" stroke="#98a65c" stroke-width="8"/>
<path d="M1435 960 C1420 1100 1380 1230 1305 1330" fill="none" stroke="#98a65c" stroke-width="8"/>
</g>
</g>
</g>
<!-- labels -->
<rect x="75" y="1115" width="660" height="200" rx="48" fill="#2c2c2c" opacity="0.8"/>
<rect x="75" y="2416" width="526" height="198" rx="48" fill="#3a3a3a" opacity="0.86"/>
</g>
</svg>
<div class="t" style="left:71.8px;top:608.9px;font-size:33px;color:#ffffff;transform:scale(1.1604,1.035);">Öğretmen</div>
<div class="t" style="left:71.8px;top:984.9px;font-size:33px;color:#ffffff;transform:scale(1.1531,1.035);">Öğrenci</div>
<svg style="left:104.0px;top:2324.0px" width="38.0" height="58.0" viewBox="0 0 38 58" fill="none" stroke="#f5f5f5" stroke-width="3" stroke-linecap="round" stroke-linejoin="round"><rect x="10.5" y="1.5" width="17" height="33" rx="8.5"/><path d="M2 26 C2 36 9 42 19 42 C29 42 36 36 36 26"/><path d="M19 42 V55 M9 56 H29"/></svg>
<div class="t" style="left:101.9px;top:2392.8px;font-size:27px;color:#dcdcdc;transform:scale(0.9231,1.035);">Ses</div>
<svg style="left:190px;top:2347px" width="18" height="12" viewBox="0 0 18 12" fill="none" stroke="#f2f2f2" stroke-width="3.2"><path d="M2 10 L9 3 L16 10"/></svg>
<svg style="left:313.0px;top:2335.0px" width="59.0" height="36.0" viewBox="0 0 59 36" fill="none" stroke="#f5f5f5" stroke-width="3" stroke-linecap="round" stroke-linejoin="round"><rect x="1.5" y="2" width="37" height="31" rx="7"/><path d="M44 13 L57 5 V31 L44 23 Z"/></svg>
<div class="t" style="left:304.9px;top:2392.8px;font-size:27px;color:#dcdcdc;transform:scale(1.0836,1.035);">Video</div>
<svg style="left:421px;top:2347px" width="18" height="12" viewBox="0 0 18 12" fill="none" stroke="#f2f2f2" stroke-width="3.2"><path d="M2 10 L9 3 L16 10"/></svg>
<svg style="left:1451.0px;top:2332.0px" width="45.0" height="43.0" viewBox="0 0 45 43" fill="none" stroke="#f5f5f5" stroke-width="3.2" stroke-linecap="round" stroke-linejoin="round"><circle cx="13.5" cy="8" r="6"/><path d="M19 19 H11 C5 19 1.5 23 1.5 28 C1.5 33 5 36.5 10 36.5 H14"/><circle cx="31" cy="14" r="5.5"/><rect x="20" y="25.5" width="23" height="15" rx="7.5"/></svg>
<div class="t" style="left:1507.8px;top:2334.3px;font-size:28px;color:#cfcfcf;transform:scale(1.0673,1.035);">1</div>
<div class="t" style="left:1400.7px;top:2392.8px;font-size:27px;color:#dcdcdc;transform:scale(1.0496,1.035);">Katılımcılar</div>
<svg style="left:1590px;top:2347px" width="18" height="12" viewBox="0 0 18 12" fill="none" stroke="#f2f2f2" stroke-width="3.2"><path d="M2 10 L9 3 L16 10"/></svg>
<svg style="left:1706.0px;top:2327.0px" width="52.0" height="52.0" viewBox="0 0 52 52" fill="none" stroke="#f5f5f5" stroke-width="2.8" stroke-linecap="round" stroke-linejoin="round"><path d="M14 10 C14 4 18 1.5 24 1.5 H40 C47 1.5 50 5 50 11 V22 C50 28 47 31 43 31"/><path d="M11 11.5 H32 C38 11.5 41 15 41 20 V32 C41 37 38 40 33 40 H24 C20 45 16 48 11 50 C13 47 14 44 14 40 H11 C5 40 1.5 37 1.5 32 V20 C1.5 15 5 11.5 11 11.5 Z"/><g fill="#f5f5f5" stroke="none"><circle cx="13" cy="26" r="2.4"/><circle cx="21.5" cy="26" r="2.4"/><circle cx="30" cy="26" r="2.4"/></g></svg>
<div class="t" style="left:1687.7px;top:2392.8px;font-size:27px;color:#dcdcdc;transform:scale(1.0582,1.035);">Sohbet</div>
<svg style="left:1802px;top:2347px" width="18" height="12" viewBox="0 0 18 12" fill="none" stroke="#f2f2f2" stroke-width="3.2"><path d="M2 10 L9 3 L16 10"/></svg>
<svg style="left:1905.0px;top:2329.0px" width="57.0" height="48.0" viewBox="0 0 57 48" fill="none" stroke="#f5f5f5" stroke-width="3" stroke-linecap="round" stroke-linejoin="round"><path d="M23 10 C19 2 9 1 4.5 7 C0 13 2 21 7 27 C12 33 19 40 24 46 C33 42 44 36 51 28 C56 22 57 14 52 9 C46 4 36 5 30 12 C27 15 25 13 23 10 Z"/></svg>
<div class="t" style="left:1877.4px;top:2392.8px;font-size:27px;color:#dcdcdc;transform:scale(1.0275,1.035);">Tepki ver</div>
<svg style="left:1991px;top:2347px" width="18" height="12" viewBox="0 0 18 12" fill="none" stroke="#f2f2f2" stroke-width="3.2"><path d="M2 10 L9 3 L16 10"/></svg>
<div class="b" style="left:2116px;top:2330px;width:56px;height:46px;background:#0de67b;border-radius:7px;"></div>
<svg style="left:2130px;top:2338px" width="28" height="30" viewBox="0 0 28 30" fill="none" stroke="#14502f" stroke-width="5.5"><path d="M14 29 V6"/><path d="M3 15 L14 4 L25 15"/></svg>
<div class="t" style="left:2102.8px;top:2392.8px;font-size:27px;color:#dcdcdc;transform:scale(1.0013,1.035);">Paylaş</div>
<svg style="left:2222px;top:2347px" width="18" height="12" viewBox="0 0 18 12" fill="none" stroke="#f2f2f2" stroke-width="3.2"><path d="M2 10 L9 3 L16 10"/></svg>
<svg style="left:2394.0px;top:2329.0px" width="43.0" height="48.0" viewBox="0 0 43 48" fill="none" stroke="#f5f5f5" stroke-width="3.2" stroke-linecap="round" stroke-linejoin="round"><path d="M21.5 2 L41 8 V22 C41 33 33 41 21.5 46 C10 41 2 33 2 22 V8 Z"/><g fill="#f5f5f5" stroke="none"><path d="M21.5 8 L8 12 V24 H21.5 Z"/><path d="M21.5 24 H35 C34 31 29 36 21.5 40 Z"/></g></svg>
<div class="t" style="left:2276.7px;top:2392.8px;font-size:27px;color:#dcdcdc;transform:scale(1.0538,1.035);">Oturum sahibi araçları</div>
<svg style="left:2663.0px;top:2324.0px" width="58.0" height="58.0" viewBox="0 0 58 58" fill="none" stroke="#f5f5f5" stroke-width="3.2" stroke-linecap="round" stroke-linejoin="round"><circle cx="29" cy="29" r="26.5"/><g fill="#f5f5f5" stroke="none"><circle cx="29" cy="16" r="3.6"/><path d="M23 23 H31.5 V39 H36 V43 H22.5 V39 H27 V27 H23 Z"/></g></svg>
<div class="t" style="left:2592.4px;top:2392.8px;font-size:27px;color:#dcdcdc;transform:scale(1.0885,1.035);">Toplantı bilgileri</div>
<svg style="left:2883.0px;top:2327.0px" width="52.0" height="52.0" viewBox="0 0 52 52" fill="none" stroke="#f5f5f5" stroke-width="3" stroke-linecap="round" stroke-linejoin="round"><path d="M2 22 V12 C2 6 6 2 12 2 H20"/><circle cx="40" cy="11.5" r="9"/><circle cx="11.5" cy="40" r="9"/><path d="M50 30 V40 C50 46 46 50 40 50 H32"/></svg>
<div class="t" style="left:2828.9px;top:2392.8px;font-size:27px;color:#dcdcdc;transform:scale(1.0601,1.035);">Uygulamalar</div>
<svg style="left:2970px;top:2347px" width="18" height="12" viewBox="0 0 18 12" fill="none" stroke="#f2f2f2" stroke-width="3.2"><path d="M2 10 L9 3 L16 10"/></svg>
<svg style="left:3105.0px;top:2331.0px" width="56.0" height="42.0" viewBox="0 0 56 42" fill="none" stroke="#f5f5f5" stroke-width="3.2" stroke-linecap="round" stroke-linejoin="round"><rect x="1.6" y="1.6" width="52.8" height="38.8" rx="7"/></svg>
<div class="t" style="left:3111.8px;top:2340.8px;font-size:24px;color:#f5f5f5;font-weight:700;transform:scale(1.2121,1.035);">CC</div>
<div class="t" style="left:3027.0px;top:2392.8px;font-size:27px;color:#dcdcdc;transform:scale(1.0335,1.035);">Alt yazıları göster</div>
<svg style="left:3223px;top:2347px" width="18" height="12" viewBox="0 0 18 12" fill="none" stroke="#f2f2f2" stroke-width="3.2"><path d="M2 10 L9 3 L16 10"/></svg>
<svg style="left:3331.0px;top:2324.0px" width="58.0" height="58.0" viewBox="0 0 58 58" fill="none" stroke="#f5f5f5" stroke-width="3.2" stroke-linecap="round" stroke-linejoin="round"><circle cx="29" cy="29" r="26.5"/><g fill="#f5f5f5" stroke="none"><circle cx="18" cy="29" r="3.3"/><circle cx="29" cy="29" r="3.3"/><circle cx="40" cy="29" r="3.3"/></g></svg>
<div class="t" style="left:3293.8px;top:2392.8px;font-size:27px;color:#dcdcdc;transform:scale(1.0244,1.035);">Daha fazla</div>
<svg style="left:4391px;top:2326px" width="57" height="52" viewBox="0 0 57 52" fill="none"><path d="M15 2 H42 L55 26 L42 50 H15 L2 26 Z" stroke="#e8155b" stroke-width="3"/><path d="M20 17.5 L37 34.5 M37 17.5 L20 34.5" stroke="#ffffff" stroke-width="6.5"/></svg>
<div class="t" style="left:4358.7px;top:2393.8px;font-size:27px;color:#dcdcdc;transform:scale(1.0444,1.035);">Sonlandır</div>
<svg style="left:817px;top:295px" width="38" height="35" viewBox="0 0 38 35" fill="none" stroke="#ef4444" stroke-width="3.4"><rect x="1.7" y="1.7" width="34.6" height="23"/><path d="M4 14 H11 L14 19 L19 8.5 L22.5 14 H34" stroke-width="2.8"/><rect x="0" y="28.5" width="38" height="6" fill="#e0484d" stroke="none"/></svg>
<svg style="left:1107px;top:297px" width="38" height="28" viewBox="0 0 38 28" fill="none" stroke="#9ca3af" stroke-width="3.4"><rect x="1.7" y="1.7" width="26.6" height="24.6" rx="3"/><path d="M29 11 L36.3 5 V23 L29 17" fill="#9ca3af" stroke="none"/></svg>
<svg style="left:1311px;top:293px" width="40" height="38" viewBox="0 0 40 38" fill="none"><path d="M0 0 H30 V23 H6 L0 29 Z" fill="#a3a9b4"/><path d="M36.5 9 V36 L31 30.5 H8" stroke="#9ca3af" stroke-width="3"/><g fill="#111827"><path d="M8.5 8.5 C8.5 4 16.5 4 16.5 8.5 C16.5 11 13.8 11.5 13.8 14 H11.2 C11.2 11 14 10.5 14 8.5 C14 7.2 11 7.2 11 8.8 Z"/><rect x="11.1" y="15.8" width="2.8" height="2.8"/><rect x="19.8" y="5" width="2.8" height="9.5"/><rect x="19.8" y="15.8" width="2.8" height="2.8"/></g></svg>
<svg style="left:823px;top:441px" width="16" height="26" viewBox="0 0 16 26" fill="none" stroke="#e5e7eb" stroke-width="3.4"><path d="M2 2 L13 13 L2 24"/></svg>
<svg style="left:4160px;top:321px" width="30" height="30" viewBox="0 0 30 30" fill="none" stroke="#581c87" stroke-width="2.8"><circle cx="15" cy="15" r="13"/><path d="M10.8 11.5 C10.8 6.5 19.2 6.5 19.2 11.5 C19.2 14.5 15 14.8 15 18" stroke-width="2.6"/><circle cx="15" cy="22" r="1.8" fill="#581c87" stroke="none"/></svg>
<svg style="left:844.7px;top:2166.5px" width="30" height="30" viewBox="0 0 27 27" fill="none" stroke="#e5e7eb" stroke-width="2.6"><circle cx="13.5" cy="13.5" r="11.5"/><path d="M13.5 12 V20" stroke-width="3"/><circle cx="13.5" cy="7.8" r="1.7" fill="#e5e7eb" stroke="none"/></svg>

</body></html>
